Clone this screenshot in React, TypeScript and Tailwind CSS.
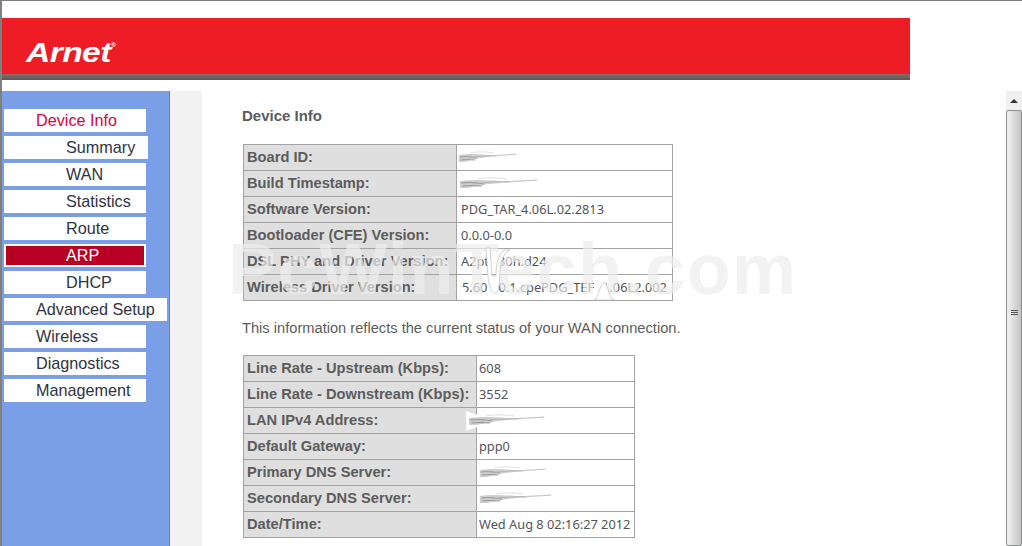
import type { ReactNode } from 'react';

const sans = "font-['Liberation_Sans',Arial,sans-serif]";

// Redacted value: the smeared blot over the original text
function Smudge({ width = 90, shift = 0, tall }: { width?: number; shift?: number; tall?: boolean }) {
  return (
    <svg
      width={width}
      height="20"
      viewBox="0 0 90 20"
      preserveAspectRatio="none"
      className="block overflow-visible"
      style={{ marginLeft: shift }}
      aria-hidden="true"
    >
      {tall && <path d="M-2 0 C10 5 30 7 44 9 C30 12 12 15 -2 20 Z" fill="#ffffff" />}
      <path d="M1 7 C18 5 40 6 64 9 C44 8 24 11 10 14 L1 14 Z" fill="#c6c6c6" opacity="0.85" />
      <path d="M3 9 C12 8 20 9 28 10 M4 12 C12 11 18 12 26 12" stroke="#8f8f8f" strokeWidth="1" fill="none" />
      <path d="M16 10 C36 7 62 8 88 6" stroke="#b4b4b4" strokeWidth="1" fill="none" />
      <path d="M20 5 C34 3 44 4 54 5" stroke="#dddddd" strokeWidth="1" fill="none" />
    </svg>
  );
}

function MenuItem({
  label,
  sub,
  className = 'w-[142px]',
  active,
  current,
}: {
  label: string;
  sub?: boolean;
  className?: string;
  active?: boolean;
  current?: boolean;
}) {
  if (current) {
    return (
      <div className={`h-[23px] bg-white ${className}`}>
        <div className="h-full border-2 border-white bg-[#b80024] pl-[60px] text-[16.2px] leading-[19px] text-white">
          {label}
        </div>
      </div>
    );
  }
  return (
    <div className={`h-[23px] bg-white ${className}`}>
      <div
        className={`h-full text-[16.2px] leading-[23px] ${sub ? 'pl-[62px]' : 'pl-[32px]'} ${
          active ? 'text-[#e4003a]' : 'text-[#2f3342]'
        }`}
      >
        {label}
      </div>
    </div>
  );
}

function InfoTable({
  rows,
  labelWidth,
  width,
  valuePad,
  className = '',
}: {
  rows: [string, ReactNode][];
  labelWidth: number;
  width: number;
  valuePad: string;
  className?: string;
}) {
  return (
    <table className={`table-fixed border-collapse ${className}`} style={{ width }}>
      <colgroup>
        <col style={{ width: labelWidth }} />
        <col />
      </colgroup>
      <tbody>
        {rows.map(([label, value]) => (
          <tr key={label} className="h-[26px]">
            <td className="whitespace-nowrap border border-[#a3a3a3] bg-[#dfdfdf] p-0 pb-[2px] pl-[3px] text-[14.67px] font-bold text-[#5c5c5c]">
              {label}
            </td>
            <td className={`whitespace-nowrap border border-[#a3a3a3] bg-white p-0 font-['Noto_Sans',sans-serif] text-[12.8px] text-[#555] ${valuePad}`}>
              {value}
            </td>
          </tr>
        ))}
      </tbody>
    </table>
  );
}

export default function App() {
  return (
    <div className={`relative h-[546px] w-[1022px] overflow-hidden border-l-2 border-t border-[#7f7f7f] bg-white ${sans}`}>
      {/* Header */}
      <header className="mt-[17px] w-[908px]">
        <div className="flex h-[56px] items-center bg-[#ee1c25] pl-[24px]">
          <span className="mt-[14px] flex origin-left scale-x-[1.2] items-start text-[28px] font-bold italic leading-none tracking-[-0.5px] text-white">
            Arnet
            <span className="mt-[3px] text-[6px] not-italic text-white">®</span>
          </span>
        </div>
        <div className="h-[6px] bg-gradient-to-b from-[#8a6a6a] to-[#5f5557]" />
      </header>

      <div className="mt-[11px] flex h-[455px]">
        {/* Sidebar */}
        <nav className="flex w-[168px] flex-col gap-[4px] border-r border-[#808080] bg-[#7a9fe6] pl-[2px] pt-[18px]">
          <MenuItem label="Device Info" active />
          <MenuItem label="Summary" sub className="w-[144px]" />
          <MenuItem label="WAN" sub />
          <MenuItem label="Statistics" sub />
          <MenuItem label="Route" sub />
          <MenuItem label="ARP" sub current />
          <MenuItem label="DHCP" sub />
          <MenuItem label="Advanced Setup" className="w-[163px]" />
          <MenuItem label="Wireless" />
          <MenuItem label="Diagnostics" />
          <MenuItem label="Management" />
        </nav>
        <div className="w-[32px] bg-[#f2f2f2]" />

        {/* Main content */}
        <main className="flex-1 pl-[40px] pt-[16px] text-[#5c5c5c]">
          <h1 className="text-[15px] font-bold leading-[18px]">Device Info</h1>
          <InfoTable
            className="ml-[1px] mt-[19px]"
            width={430}
            labelWidth={213}
            valuePad="pl-[4px]"
            rows={[
              ['Board ID:', <Smudge width={60} shift={-3} />],
              ['Build Timestamp:', <Smudge width={80} shift={-2} />],
              ['Software Version:', 'PDG_TAR_4.06L.02.2813'],
              ['Bootloader (CFE) Version:', '0.0.0-0.0'],
              ['DSL PHY and Driver Version:', <><span>A2pt</span><span className="ml-[9px]">30h.d24</span></>],
              ['Wireless Driver Version:', <><span className="ml-[1px]">5.60</span><span className="ml-[11px]">0.1.cpePDG_TEF</span><span className="ml-[8px]">1.06L2.002</span></>],
            ]}
          />
          <p className="mt-[18px] text-[14.67px] leading-[18px]">
            This information reflects the current status of your WAN connection.
          </p>
          <InfoTable
            className="ml-[1px] mt-[18px]"
            width={392}
            labelWidth={233}
            valuePad="pl-[2px]"
            rows={[
              ['Line Rate - Upstream (Kbps):', '608'],
              ['Line Rate - Downstream (Kbps):', '3552'],
              ['LAN IPv4 Address:', <Smudge width={78} shift={-11} tall />],
              ['Default Gateway:', 'ppp0'],
              ['Primary DNS Server:', <Smudge width={68} />],
              ['Secondary DNS Server:', <Smudge width={74} />],
              ['Date/Time:', 'Wed Aug 8 02:16:27 2012'],
            ]}
          />
        </main>

        {/* Scrollbar */}
        <div className="flex w-[16px] flex-col bg-[#f0f0f0]">
          <div className="flex h-[19px] items-center justify-center">
            <div className="h-0 w-0 border-x-[4px] border-b-[4px] border-x-transparent border-b-[#333]" />
          </div>
          <div className="flex flex-1 items-start justify-center rounded-[2px] border border-[#8e8f8f] bg-gradient-to-r from-[#f2f2f2] to-[#c4c4c4] pt-[199px]">
            <div className="flex w-[7px] flex-col gap-[1px]">
              <div className="h-[1px] bg-[#555]" />
              <div className="h-[1px] bg-[#555]" />
              <div className="h-[1px] bg-[#555]" />
            </div>
          </div>
        </div>
      </div>

      {/* Watermark over the page */}
      <div className="pointer-events-none absolute left-[226px] top-[233px] whitespace-nowrap text-[72px] font-bold leading-[70px] tracking-[1.5px] text-[#ececec]/70">
        PcWinTech.com
      </div>

      {/* Wavy distortion left by the watermark removal */}
      <svg className="pointer-events-none absolute left-[450px] top-[245px]" width="170" height="60" viewBox="0 0 170 60" aria-hidden="true">
        <path d="M34 2 L36 30 C37 44 42 52 46 44 C50 30 44 12 58 4 L52 4 C46 10 44 18 44 30 L40 30 L38 2 Z" fill="#ffffff" stroke="#bdbdbd" strokeWidth="0.7" />
        <path d="M8 38 C4 48 8 54 22 52 L60 54 L40 48 L20 48 C12 46 10 42 8 38 Z" fill="#ffffff" />
        <path d="M142 54 C146 54 147 40 152 36 C156 36 156 52 162 54 Z" fill="#ffffff" stroke="#bdbdbd" strokeWidth="0.7" />
      </svg>
    </div>
  );
}
